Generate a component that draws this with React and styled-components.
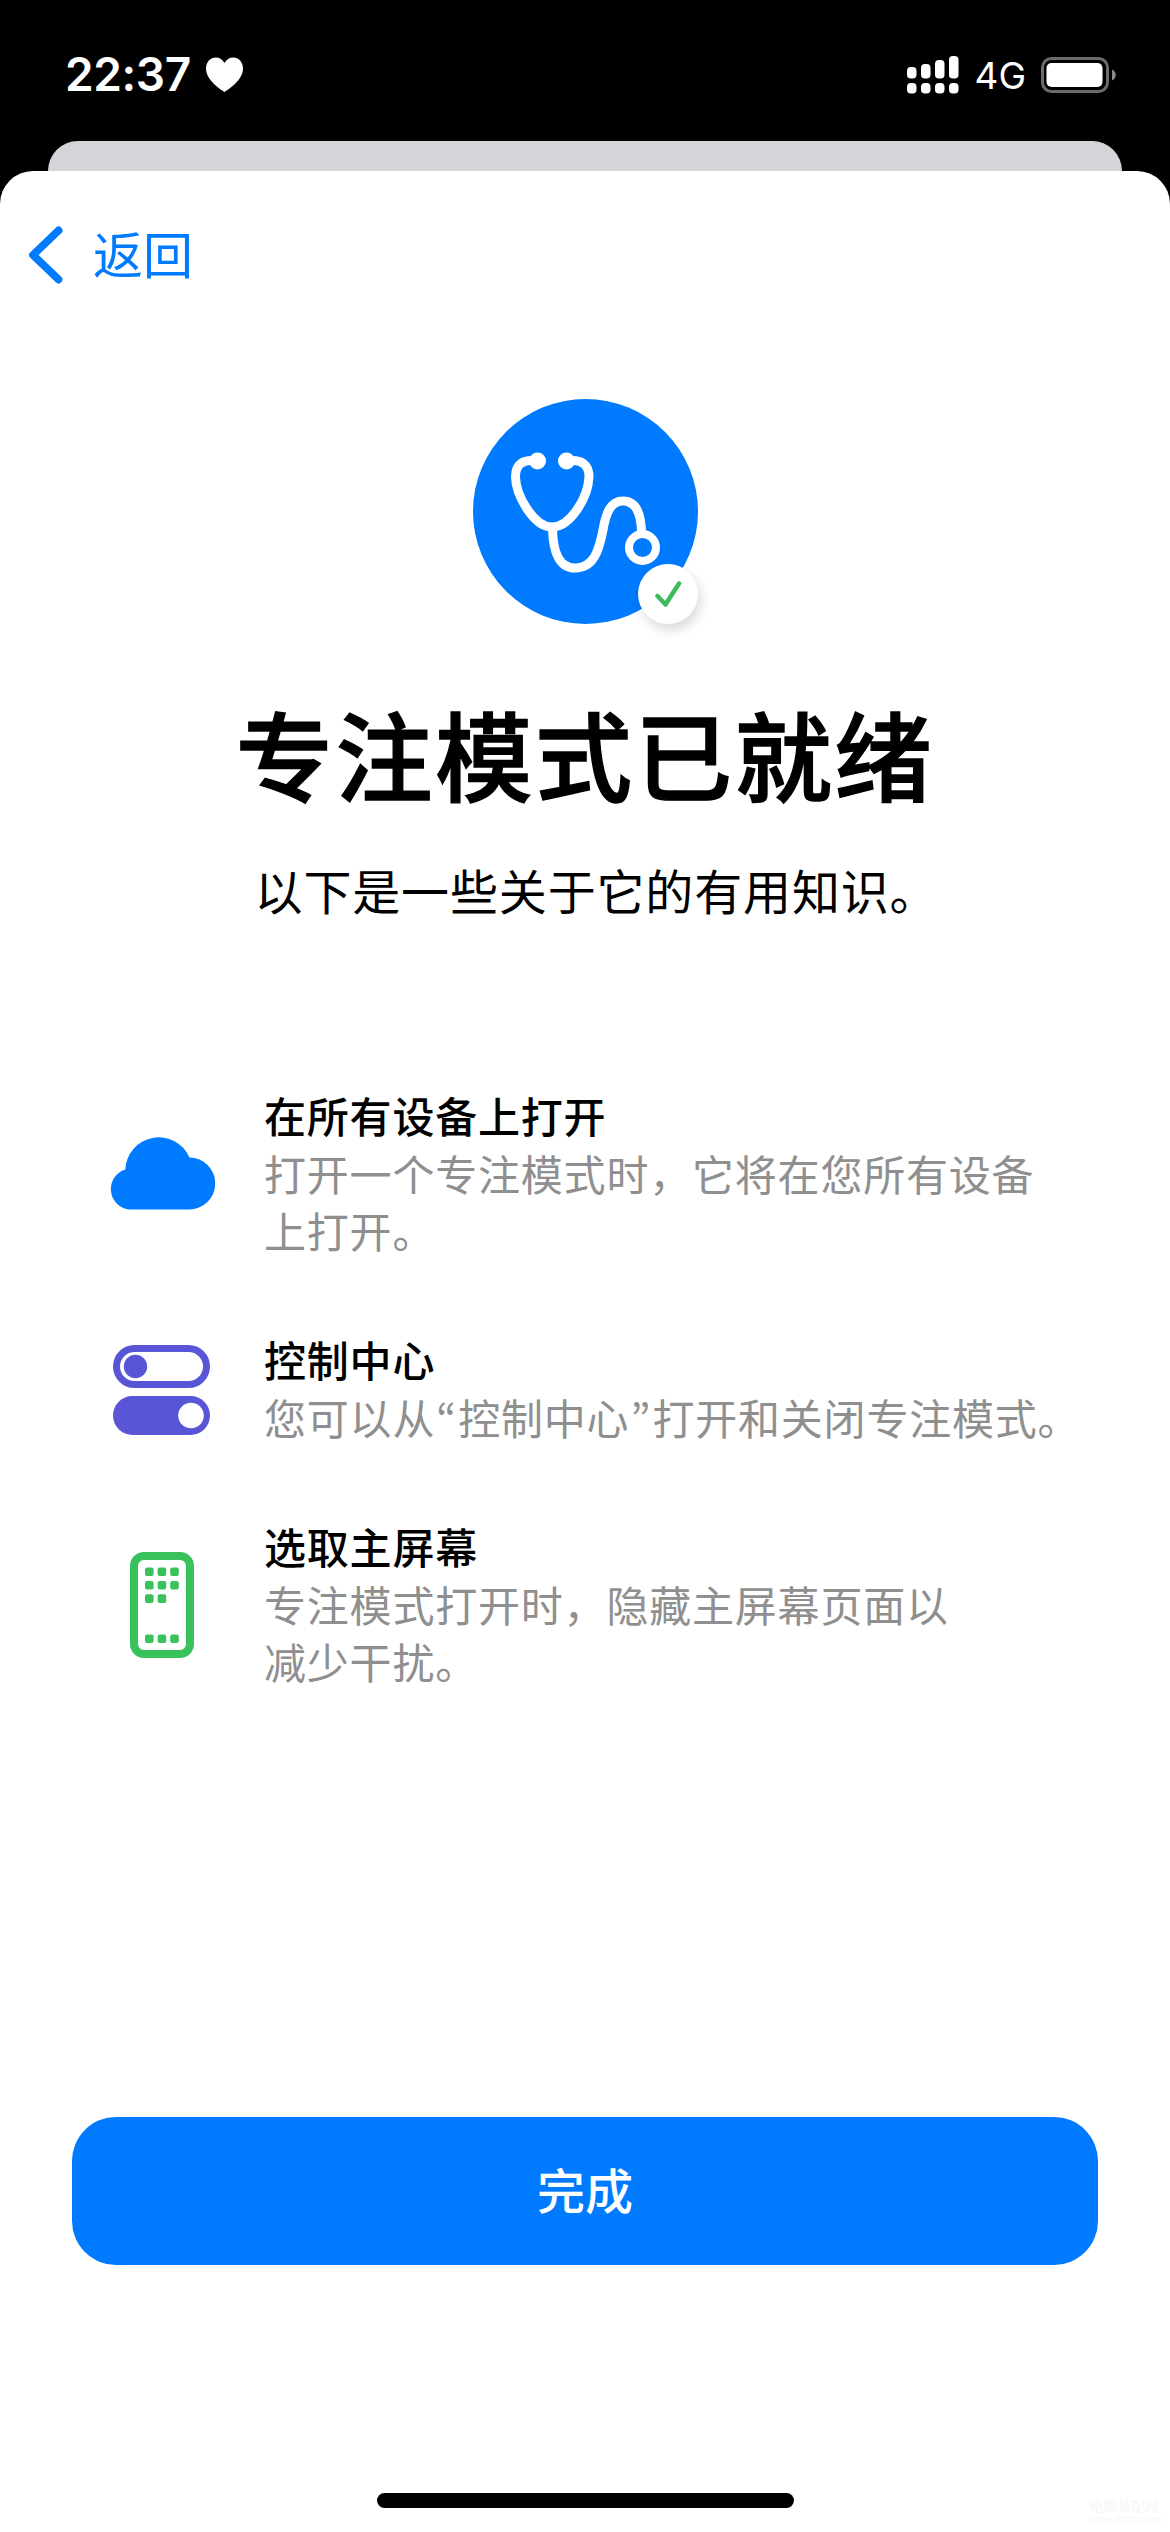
import styled, { createGlobalStyle } from 'styled-components';

const GlobalStyle = createGlobalStyle`
    * {
        box-sizing: border-box;
    }

    body {
        margin: 0;
        background: #000;
        font-family: Inter, 'Noto Sans CJK SC', sans-serif;
    }

    h1,
    h2,
    p {
        margin: 0;
    }

    svg {
        display: block;
        flex: none;
    }
`;

const Screen = styled.div`
    display: flex;
    flex-direction: column;
    width: 1170px;
    height: 2532px;
    background: #000;
    overflow: hidden;
`;

const StatusBar = styled.header`
    display: flex;
    align-items: center;
    height: 141px;
    padding: 0 54px 0 65px;
`;

const Time = styled.span`
    margin: 7px 15px 0 0;
    font-size: 46px;
    font-weight: 600;
    line-height: 56px;
    letter-spacing: -0.4px;
    color: #fff;
`;

const HeartSlot = styled.span`
    padding-top: 8px;
`;

const StatusIcons = styled.div`
    display: flex;
    align-items: center;
    margin-left: auto;
    padding-top: 8px;
`;

const Network = styled.span`
    margin: 3px 15px 0 15px;
    font-size: 37px;
    font-weight: 400;
    line-height: 44px;
    color: #fff;
`;

const SheetBehind = styled.div`
    flex: none;
    height: 30px;
    margin: 0 48px;
    border-radius: 30px 30px 0 0;
    background: #d5d4d9;
`;

const Sheet = styled.main`
    position: relative;
    display: flex;
    flex: 1;
    flex-direction: column;
    align-items: center;
    border-radius: 33px 33px 0 0;
    background: #fff;
`;

const BackButton = styled.button`
    display: flex;
    align-items: center;
    align-self: flex-start;
    gap: 29px;
    height: 168px;
    padding: 0 0 0 28px;
    border: 0;
    background: none;
    font-family: 'Noto Sans CJK SC', sans-serif;
    font-size: 50px;
    line-height: 72px;
    color: #007aff;

    span {
        padding-bottom: 6px;
    }
`;

const FocusBadge = styled.div`
    position: relative;
    width: 225px;
    height: 225px;
    margin-top: 60px;
    border-radius: 50%;
    background: #007aff;
`;

const ReadyMark = styled.span`
    position: absolute;
    right: 0;
    bottom: 0;
    display: flex;
    align-items: center;
    justify-content: center;
    width: 60px;
    height: 60px;
    border-radius: 50%;
    background: #fff;
    box-shadow: 3px 6px 12px rgba(0, 0, 0, 0.15);
`;

const Title = styled.h1`
    margin-top: 56px;
    font-family: 'Noto Sans CJK SC', sans-serif;
    font-size: 97px;
    font-weight: 500;
    line-height: 144px;
    letter-spacing: 2.8px;
    color: #000;
    -webkit-text-stroke: 1.4px #000;
`;

const Subtitle = styled.p`
    margin-top: 29px;
    padding-left: 23px;
    font-family: 'Noto Sans CJK SC', sans-serif;
    font-size: 48px;
    line-height: 72px;
    letter-spacing: 0.85px;
    color: #000;
`;

const FeatureList = styled.div`
    display: flex;
    flex-direction: column;
    align-self: stretch;
    gap: 68px;
    margin-top: 161px;
    padding: 0 60px 0 98px;
`;

const Feature = styled.section`
    display: flex;
    align-items: center;
    gap: 38px;
`;

const FeatureIcon = styled.div`
    display: flex;
    flex: none;
    justify-content: center;
    width: 128px;
`;

const FeatureText = styled.div`
    padding-bottom: 4px;
    font-family: 'Noto Sans CJK SC', sans-serif;
    font-size: 42px;
    line-height: 57px;
    letter-spacing: 0.8px;
    white-space: pre;

    h2 {
        font-size: inherit;
        font-weight: 500;
        line-height: 58px;
        color: #000;
    }

    p {
        color: #8f8f8f;
    }
`;

/* Narrow quotation marks, the SC font draws them full width */
const Quote = styled.span`
    display: inline-block;
    width: 23px;
    font-family: 'Noto Sans CJK KR', sans-serif;
    line-height: 1;
    text-align: center;
`;

const DoneButton = styled.button`
    width: 1026px;
    height: 148px;
    margin-top: auto;
    padding: 0 0 6px;
    border: 0;
    border-radius: 44px;
    background: #007aff;
    font-family: 'Noto Sans CJK SC', sans-serif;
    font-size: 48px;
    font-weight: 500;
    color: #fff;
`;

const HomeIndicator = styled.div`
    width: 417px;
    height: 15px;
    margin: 228px 0 24px;
    border-radius: 8px;
    background: #000;
`;

const Watermark = styled.div`
    position: absolute;
    right: 9px;
    bottom: 6px;
    font-size: 14px;
    line-height: 15px;
    text-align: center;
    color: #f6f6f6;

    small {
        display: block;
        font-size: 10px;
        line-height: 13px;
    }
`;

const HeartIcon = () => (
    <svg width="37" height="35" viewBox="0 0 37 35" fill="#fff">
        <path d="M18.5 35C14 32 0 23 0 11.500C0 5 4.500 0.500 9.800 0.500C13.500 0.500 16.700 2.500 18.500 6C20.300 2.500 23.500 0.500 27.200 0.500C32.500 0.500 37 5 37 11.500C37 23 23 32 18.500 35Z" />
    </svg>
);

const SignalIcon = () => (
    <svg width="52" height="38" viewBox="0 0 52 38" fill="#fff">
        {[11, 8, 4, 0].map((top, i) => (
            <g key={top}>
                <rect x={i * 14} y={top} width="9.500" height={22.5 - top} rx="3.800" />
                <rect x={i * 14} y="27" width="9.500" height="10.500" rx="3.800" />
            </g>
        ))}
    </svg>
);

const BatteryIcon = () => (
    <svg width="75" height="36" viewBox="0 0 75 36">
        <rect x="1.500" y="1.500" width="65" height="33" rx="9" fill="none" stroke="#6b6b6b" strokeWidth="3" />
        <rect x="5.500" y="6" width="56" height="24" rx="5" fill="#fff" />
        <path d="M71 12.500C76 14.500 76 21.500 71 23.500Z" fill="#8a8a8a" />
    </svg>
);

const BackIcon = () => (
    <svg width="36" height="60" viewBox="0 0 36 60" fill="none">
        <path d="M30.500 5.500L5 30L30.500 54.500" stroke="#007aff" strokeWidth="7.800" strokeLinecap="round" strokeLinejoin="round" />
    </svg>
);

const StethoscopeIcon = () => (
    <svg width="225" height="225" viewBox="0 0 225 225" fill="none" stroke="#fff" strokeWidth="9" strokeLinecap="round">
        <path d="M64 62C50 60 42.500 65 42.500 78C43 97 61 128 79 128C97 128 115 99 116 78C116 65 108 60 94 62" />
        <path d="M79.500 130C80 154 87 169 102 169C121 169 126 151 130 131C133 113 138 102 150 102C163 102 168 115 168.500 133" />
        <circle cx="64.500" cy="62" r="8.500" fill="#fff" stroke="none" />
        <circle cx="93.500" cy="62" r="8.500" fill="#fff" stroke="none" />
        <circle cx="169.500" cy="148.500" r="13.500" strokeWidth="8" />
    </svg>
);

const CheckIcon = () => (
    <svg width="28" height="28" viewBox="0 0 28 28" fill="none">
        <path d="M3.500 16L11.500 24.500L25 3.500" stroke="#3dbb5d" strokeWidth="4.500" strokeLinecap="round" strokeLinejoin="round" />
    </svg>
);

const CloudIcon = () => (
    <svg width="106" height="76" viewBox="0 0 106 76" fill="#007aff">
        <path d="M20.500 73.500A20.500 20.500 0 0 1 16.300 33.500A33.500 33.500 0 0 1 80.500 21.500A26 26 0 0 1 80 73.500Z" />
    </svg>
);

const SwitchesIcon = () => (
    <svg width="98" height="90" viewBox="0 0 98 90">
        <rect x="3.500" y="3.500" width="90" height="36" rx="18" fill="none" stroke="#5856d6" strokeWidth="7" />
        <circle cx="22.500" cy="21.500" r="11.700" fill="#5856d6" />
        <rect y="51" width="97" height="39" rx="19.500" fill="#5856d6" />
        <circle cx="78" cy="70.500" r="12.800" fill="#fff" />
    </svg>
);

const appDots = [
    [0, 0], [1, 0], [2, 0],
    [0, 1], [1, 1], [2, 1],
    [0, 2], [1, 2],
    [0, 5], [1, 5], [2, 5],
];

const HomeScreenIcon = () => (
    <svg width="64" height="106" viewBox="0 0 64 106" fill="#39c25c">
        <rect x="4" y="4" width="56" height="98" rx="10" fill="none" stroke="#39c25c" strokeWidth="8" />
        {appDots.map(([col, row]) => (
            <rect key={`${col}-${row}`} x={15 + col * 12.6} y={15.5 + row * 13.4} width="8.600" height="8.600" rx="2" />
        ))}
    </svg>
);

const features = [
    {
        icon: <CloudIcon />,
        title: '在所有设备上打开',
        text: '打开一个专注模式时，它将在您所有设备\n上打开。',
    },
    {
        icon: <SwitchesIcon />,
        title: '控制中心',
        text: (
            <>
                您可以从<Quote lang="ko">“</Quote>控制中心<Quote lang="ko">”</Quote>打开和关闭专注模式。
            </>
        ),
    },
    {
        icon: <HomeScreenIcon />,
        title: '选取主屏幕',
        text: '专注模式打开时，隐藏主屏幕页面以\n减少干扰。',
    },
];

export default function App() {
    return (
        <Screen lang="zh-CN">
            <GlobalStyle />
            <StatusBar>
                <Time>22:37</Time>
                <HeartSlot>
                    <HeartIcon />
                </HeartSlot>
                <StatusIcons>
                    <SignalIcon />
                    <Network>4G</Network>
                    <BatteryIcon />
                </StatusIcons>
            </StatusBar>
            <SheetBehind />
            <Sheet>
                <BackButton>
                    <BackIcon />
                    <span>返回</span>
                </BackButton>
                <FocusBadge>
                    <StethoscopeIcon />
                    <ReadyMark>
                        <CheckIcon />
                    </ReadyMark>
                </FocusBadge>
                <Title>专注模式已就绪</Title>
                <Subtitle>以下是一些关于它的有用知识。</Subtitle>
                <FeatureList>
                    {features.map(({ icon, title, text }) => (
                        <Feature key={title}>
                            <FeatureIcon>{icon}</FeatureIcon>
                            <FeatureText>
                                <h2>{title}</h2>
                                <p>{text}</p>
                            </FeatureText>
                        </Feature>
                    ))}
                </FeatureList>
                <DoneButton>完成</DoneButton>
                <HomeIndicator />
                <Watermark>
                    电脑装配网
                    <small>www.dnzp.com</small>
                </Watermark>
            </Sheet>
        </Screen>
    );
}
